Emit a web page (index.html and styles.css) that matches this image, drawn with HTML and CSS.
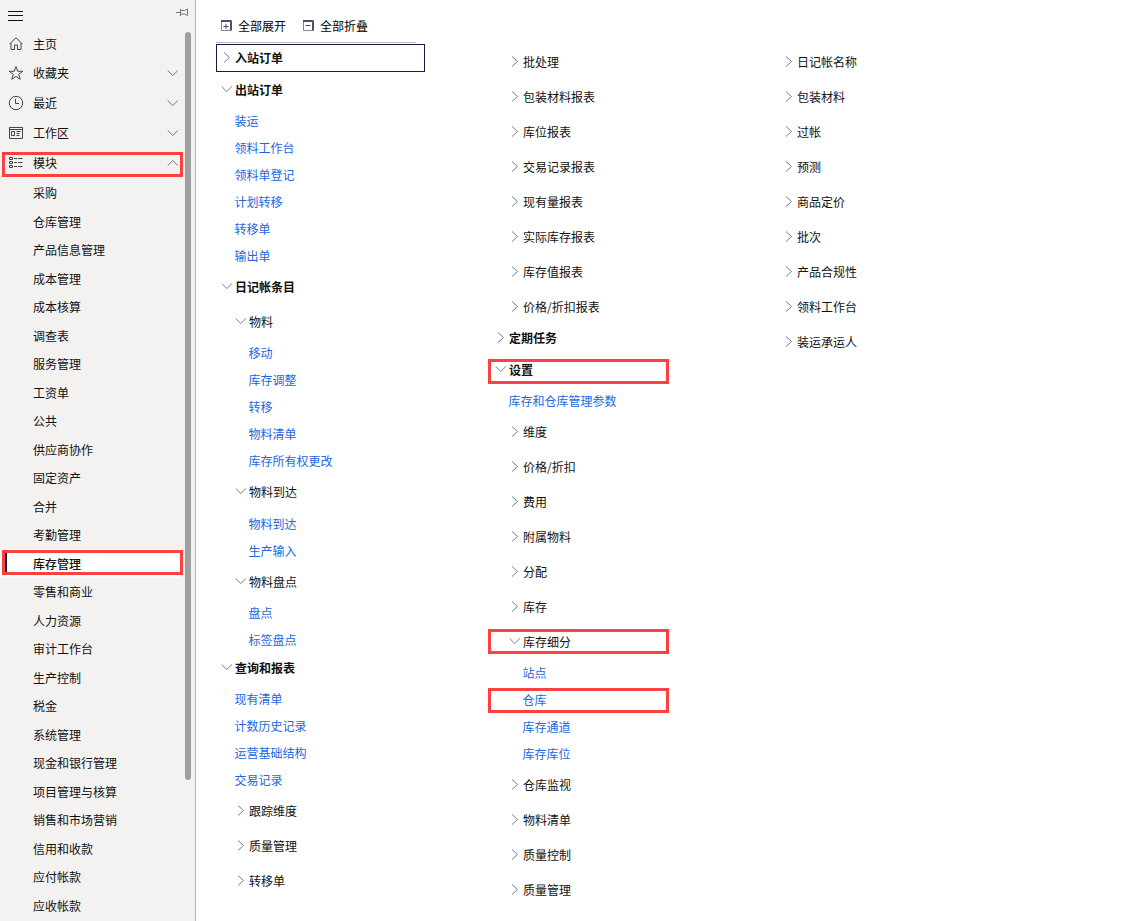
FILE: index.html
```html
<!DOCTYPE html>
<html lang="zh-CN">
<head>
<meta charset="utf-8">
<title>库存管理</title>
<link rel="stylesheet" href="styles.css">
</head>
<body>
<svg class="defs" aria-hidden="true">
  <symbol id="right" viewBox="0 0 12 12"><path d="M3 1.500l5.500 5L3 11.500"/></symbol>
  <symbol id="down" viewBox="0 0 12 12"><path d="M.7 3.500l5.100 5 5.100-5"/></symbol>
  <symbol id="up" viewBox="0 0 12 12"><path d="M.7 8.500l5.100-5 5.100 5"/></symbol>
</svg>
<div class="app">
  <aside class="sidebar">
    <header class="topbar">
      <svg class="menu" viewBox="0 0 16 12"><path d="M0 1.500h15M0 5.500h15M0 10.500h15"/></svg>
      <svg class="pin" viewBox="0 0 13 8"><path d="M0 4.500h4.500M4.500 1v7M4.500 2.500h4L11.500 1v6.500L8.500 6h-4"/></svg>
    </header>
    <nav class="nav">
      <a class="item"><svg class="icon" viewBox="0 0 16 16"><path d="M1.500 8L8 1.800 14.500 8M3 7v6.500h3.500V9h3v4.500H13V7"/></svg><span>主页</span></a>
      <a class="item raised"><svg class="icon" viewBox="0 0 16 16"><path d="M8 1.500l1.700 4.800h5l-4 3 1.500 5L8 11.300 3.800 14.300l1.500-5-4-3h5z"/></svg><span>收藏夹</span><svg class="chev"><use href="#down"/></svg></a>
      <a class="item"><svg class="icon" viewBox="0 0 16 16"><circle cx="8" cy="8" r="6.700"/><path d="M7.500 4v4.500H11"/></svg><span>最近</span><svg class="chev"><use href="#down"/></svg></a>
      <a class="item"><svg class="icon" viewBox="0 0 16 16"><path d="M1.500 2.500h13v11h-13zM1.500 4.500h13M3.500 6.500h3v4h-3zM8.500 6.500h4M8.500 8.500h3M8.500 10.500h3"/></svg><span>工作区</span><svg class="chev"><use href="#down"/></svg></a>
      <a class="item marked"><svg class="icon" viewBox="0 0 16 16"><path d="M1.500 2.500h3v2h-3zM1.500 6.500h3v2h-3zM1.500 10.500h3v2h-3zM6 3.500h3M10 3.500h4.500M6 7.500h3M10 7.500h4.500M6 11.500h3M10 11.500h4.500"/></svg><span>模块</span><svg class="chev"><use href="#up"/></svg></a>
    </nav>
    <nav class="modules">
      <a>采购</a><a>仓库管理</a><a>产品信息管理</a><a>成本管理</a><a>成本核算</a><a>调查表</a><a>服务管理</a><a>工资单</a><a>公共</a><a>供应商协作</a><a>固定资产</a><a>合并</a><a>考勤管理</a><a class="current">库存管理</a><a>零售和商业</a><a>人力资源</a><a>审计工作台</a><a>生产控制</a><a>税金</a><a>系统管理</a><a>现金和银行管理</a><a>项目管理与核算</a><a>销售和市场营销</a><a>信用和收款</a><a>应付帐款</a><a>应收帐款</a>
    </nav>
    <div class="scrollbar"></div>
  </aside>
  <main class="panel">
    <section class="column first">
      <div class="tools">
        <button><svg viewBox="0 0 12 12"><path class="shade" d="M.5 1v9.500H10"/><path d="M0 1.500h9.500v9M0 .5h10.500v10M5 4v5M2.500 6.500h5"/></svg>全部展开</button>
        <button><svg viewBox="0 0 12 12"><path class="shade" d="M.5 1v9.500H10"/><path d="M0 1.500h9.500v9M0 .5h10.500v10M2.500 5.500h5"/></svg>全部折叠</button>
      </div>
      <div class="head focus"><svg><use href="#right"/></svg>入站订单</div>
      <div class="head"><svg><use href="#down"/></svg>出站订单</div>
      <a class="link">装运</a>
      <a class="link">领料工作台</a>
      <a class="link">领料单登记</a>
      <a class="link">计划转移</a>
      <a class="link">转移单</a>
      <a class="link">输出单</a>
      <div class="head"><svg><use href="#down"/></svg>日记帐条目</div>
      <div class="group"><svg><use href="#down"/></svg>物料</div>
      <a class="link sub">移动</a>
      <a class="link sub">库存调整</a>
      <a class="link sub">转移</a>
      <a class="link sub">物料清单</a>
      <a class="link sub">库存所有权更改</a>
      <div class="group arrival"><svg><use href="#down"/></svg>物料到达</div>
      <a class="link sub">物料到达</a>
      <a class="link sub">生产输入</a>
      <div class="group"><svg><use href="#down"/></svg>物料盘点</div>
      <a class="link sub">盘点</a>
      <a class="link sub">标签盘点</a>
      <div class="head"><svg><use href="#down"/></svg>查询和报表</div>
      <a class="link">现有清单</a>
      <a class="link">计数历史记录</a>
      <a class="link">运营基础结构</a>
      <a class="link">交易记录</a>
      <div class="group"><svg><use href="#right"/></svg>跟踪维度</div>
      <div class="group"><svg><use href="#right"/></svg>质量管理</div>
      <div class="group"><svg><use href="#right"/></svg>转移单</div>
    </section>
    <section class="column">
      <div class="group"><svg><use href="#right"/></svg>批处理</div>
      <div class="group"><svg><use href="#right"/></svg>包装材料报表</div>
      <div class="group"><svg><use href="#right"/></svg>库位报表</div>
      <div class="group"><svg><use href="#right"/></svg>交易记录报表</div>
      <div class="group"><svg><use href="#right"/></svg>现有量报表</div>
      <div class="group"><svg><use href="#right"/></svg>实际库存报表</div>
      <div class="group"><svg><use href="#right"/></svg>库存值报表</div>
      <div class="group"><svg><use href="#right"/></svg>价格/折扣报表</div>
      <div class="head"><svg><use href="#right"/></svg>定期任务</div>
      <div class="head marked"><svg><use href="#down"/></svg>设置</div>
      <a class="link">库存和仓库管理参数</a>
      <div class="group"><svg><use href="#right"/></svg>维度</div>
      <div class="group"><svg><use href="#right"/></svg>价格/折扣</div>
      <div class="group"><svg><use href="#right"/></svg>费用</div>
      <div class="group"><svg><use href="#right"/></svg>附属物料</div>
      <div class="group"><svg><use href="#right"/></svg>分配</div>
      <div class="group"><svg><use href="#right"/></svg>库存</div>
      <div class="group marked"><svg><use href="#down"/></svg>库存细分</div>
      <a class="link sub">站点</a>
      <a class="link sub marked">仓库</a>
      <a class="link sub">库存通道</a>
      <a class="link sub">库存库位</a>
      <div class="group"><svg><use href="#right"/></svg>仓库监视</div>
      <div class="group"><svg><use href="#right"/></svg>物料清单</div>
      <div class="group"><svg><use href="#right"/></svg>质量控制</div>
      <div class="group"><svg><use href="#right"/></svg>质量管理</div>
    </section>
    <section class="column">
      <div class="group"><svg><use href="#right"/></svg>日记帐名称</div>
      <div class="group"><svg><use href="#right"/></svg>包装材料</div>
      <div class="group"><svg><use href="#right"/></svg>过帐</div>
      <div class="group"><svg><use href="#right"/></svg>预测</div>
      <div class="group"><svg><use href="#right"/></svg>商品定价</div>
      <div class="group"><svg><use href="#right"/></svg>批次</div>
      <div class="group"><svg><use href="#right"/></svg>产品合规性</div>
      <div class="group"><svg><use href="#right"/></svg>领料工作台</div>
      <div class="group"><svg><use href="#right"/></svg>装运承运人</div>
    </section>
  </main>
</div>
</body>
</html>
```

FILE: styles.css
```css
*, *::before, *::after { box-sizing: border-box; }
body {
  margin: 0;
  height: 921px;
  overflow: hidden;
  background: #fff;
  color: #111;
  font: 12px/18px "Noto Sans CJK SC", sans-serif;
}
svg { fill: none; stroke: #333; flex: none; }
.defs { position: absolute; width: 0; height: 0; }
.app { display: flex; height: 921px; overflow: hidden; }

.sidebar {
  position: relative;
  flex: none;
  width: 196px;
  background: #f3f2f1;
  border-right: 1px solid #b5b3b1;
}
.topbar {
  display: flex;
  justify-content: space-between;
  height: 29px;
  padding: 8px 6px 0 8px;
}
.menu { width: 16px; height: 12px; margin-top: 2px; stroke: #111; }
.pin { width: 13px; height: 8px; stroke: #777; }
.nav { padding-bottom: 1px; }
.item {
  position: relative;
  display: flex;
  align-items: center;
  height: 29.8px;
  padding: 0 16px 0 8px;
}
.item.raised { padding-bottom: 2px; }
.item .icon { width: 16px; height: 16px; margin-right: 9px; stroke: #444; }
.item .chev { width: 12px; height: 12px; margin-left: auto; stroke: #777; }
.modules a {
  position: relative;
  display: flex;
  align-items: center;
  height: 28.5px;
  padding-left: 33px;
}
.modules .current {
  width: 181px;
  background: #fff;
  font-weight: 500;
}
.modules .current::before {
  content: "";
  position: absolute;
  left: 5px;
  top: 3px;
  width: 2px;
  height: 20px;
  background: #15194b;
}
.item.marked::after,
.modules .current::after {
  content: "";
  position: absolute;
  left: 2px;
  width: 181px;
  height: 25px;
  border: 3px solid #ff4040;
}
.item.marked::after { top: 3.800px; }
.modules .current::after { top: .5px; }
.scrollbar {
  position: absolute;
  left: 185px;
  top: 32px;
  width: 6px;
  height: 748px;
  border-radius: 3px;
  background: #a19f9d;
}

.panel { display: flex; padding-left: 20px; }
.column { flex: none; width: 274px; padding-top: 48px; }
.column.first { padding-top: 11px; }
.tools {
  display: flex;
  gap: 17px;
  width: 200px;
  height: 32px;
  margin-bottom: 1px;
  padding-left: 5px;
  border-bottom: 1px solid #bbb;
}
.tools button {
  display: flex;
  align-items: center;
  height: 30px;
  padding: 0;
  border: 0;
  background: none;
  color: #000;
  font: inherit;
  white-space: nowrap;
}
.tools svg { width: 12px; height: 12px; margin: 0 5px 0 0; stroke: #4a4d6c; }
.tools .shade { stroke: #8a8498; }

.head, .group {
  position: relative;
  display: flex;
  align-items: center;
  height: 28px;
  padding-left: 5px;
}
.head { font-weight: 700; }
.group { padding-left: 19px; }
.head svg, .group svg { width: 12px; height: 12px; margin: 0 2px 2px 0; stroke: #777f88; }
.focus { width: 209px; }
.focus::after {
  content: "";
  position: absolute;
  inset: 0;
  border: 1px solid #15194b;
}
.link {
  position: relative;
  display: flex;
  align-items: center;
  height: 26px;
  padding-left: 18.5px;
  color: #2266e3;
}
.link.sub { padding-left: 32.5px; }
.link + .link { margin-top: 1px; }
.head + .head, .head + .link, .link + .head, .group + .link, .link + .group { margin-top: 4px; }
.head + .group, .group + .group { margin-top: 7px; }
.group + .head { margin-top: 3px; }
.arrival + .link { margin-top: 5px; }
.link.sub + .head { margin-top: 1px; }
.column .marked::after {
  content: "";
  position: absolute;
  left: -2px;
  top: 3px;
  width: 181px;
  height: 25px;
  border: 3px solid #ff4040;
}
.column .group.marked::after,
.column .link.marked::after { top: 1px; }
```
